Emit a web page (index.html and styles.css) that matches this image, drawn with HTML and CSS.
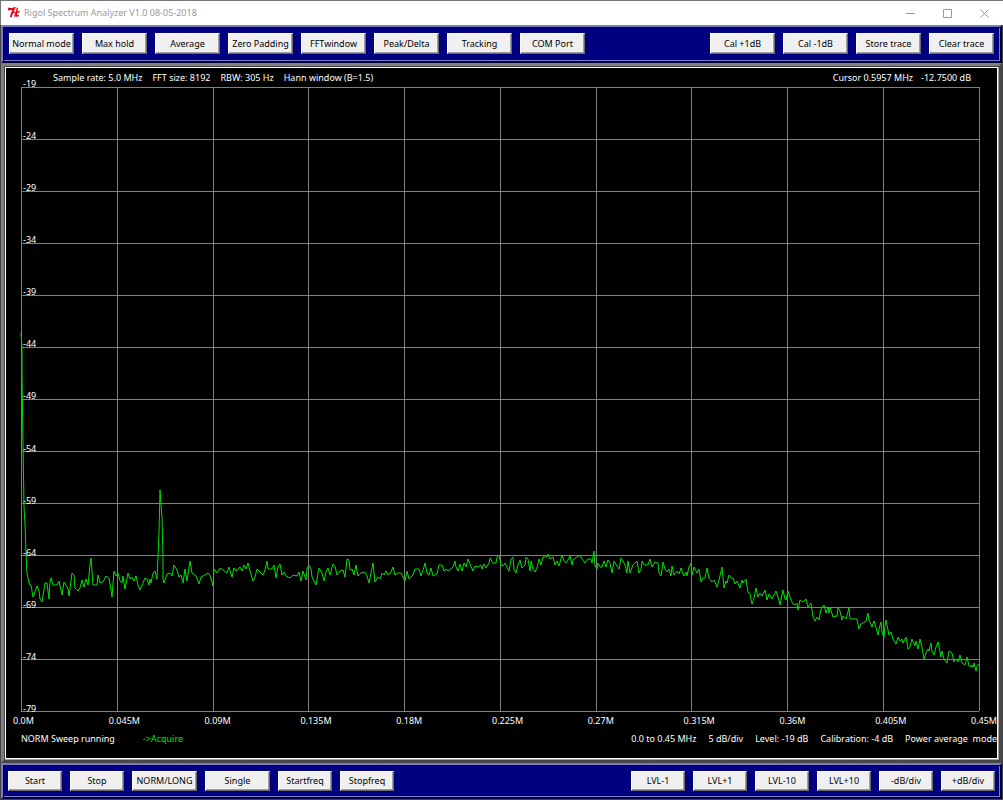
FILE: index.html
```
<!DOCTYPE html>
<html lang="en">
<head>
  <meta charset="UTF-8" />
  <meta name="viewport" content="width=device-width, initial-scale=1" />
  <title>Rigol Spectrum Analyzer V1.0 08-05-2018</title>
  <link rel="stylesheet" href="styles.css">
</head>
<body>
  <header class="titlebar">
    <svg class="logo" viewBox="0 0 12 12" aria-hidden="true">
      <path d="M0.3 3.2 L1 1.8 Q3.5 2.6 6 1.4 Q4.2 5 2.8 10" />
      <path class="thin" d="M9.6 0.8 L6.8 9.8 M5 5.8 L7 5 M11.6 4.2 L8 6.4 L9 9.2 L10.8 8.4" />
    </svg>
    <h1>Rigol Spectrum Analyzer V1.0 08-05-2018</h1>
    <div class="window-controls">
      <button type="button" aria-label="Minimize"><svg viewBox="0 0 9 9"><path d="M0 4.5H9" /></svg></button>
      <button type="button" aria-label="Maximize"><svg viewBox="0 0 9 9"><path d="M0.5 0.5H8.5V8.5H0.5Z" /></svg></button>
      <button type="button" aria-label="Close"><svg viewBox="0 0 9 9"><path d="M0.5 0.5L8.5 8.5M8.5 0.5L0.5 8.5" /></svg></button>
    </div>
  </header>

  <nav class="toolbar" aria-label="Modes">
    <div class="group">
      <button type="button" class="wide">Normal mode</button>
      <button type="button" class="wide">Max hold</button>
      <button type="button" class="wide">Average</button>
      <button type="button" class="wide">Zero Padding</button>
      <button type="button" class="wide">FFTwindow</button>
      <button type="button" class="wide">Peak/Delta</button>
      <button type="button" class="wide">Tracking</button>
      <button type="button" class="wide">COM Port</button>
    </div>
    <div class="group">
      <button type="button" class="wide">Cal +1dB</button>
      <button type="button" class="wide">Cal -1dB</button>
      <button type="button" class="wide">Store trace</button>
      <button type="button" class="wide">Clear trace</button>
    </div>
  </nav>

  <main class="screen">
    <div class="info">
      <div class="info-left">
        <span>Sample rate: 5.0 MHz</span>
        <span>FFT size: 8192</span>
        <span>RBW: 305 Hz</span>
        <span>Hann window (B=1.5)</span>
      </div>
      <div class="info-right">
        <span>Cursor 0.5957 MHz</span>
        <span>-12.7500 dB</span>
      </div>
    </div>

    <div class="plot">
      <svg viewBox="21 87 958 624" preserveAspectRatio="none" role="img" aria-label="Spectrum trace">
        <path class="grid" d="M21 87H979M21 139H979M21 191H979M21 243H979M21 295H979M21 347H979M21 399H979M21 451H979M21 503H979M21 555H979M21 607H979M21 659H979M21 711H979" />
        <path class="grid" d="M21 87V711M117 87V711M213 87V711M308 87V711M404 87V711M500 87V711M596 87V711M691 87V711M787 87V711M883 87V711M979 87V711" />
        <polyline class="trace" points="
          21,333 22,347 22,375 23,443 24,507 25,523 26,553 27,573 29,583 30,585 31,585 33,597 34,595 37,586 39,591 40,599
          42,602 45,583 47,583 49,599 50,582 51,578 53,585 57,585 59,581 61,590 62,595 64,582 67,587 68,589
          69,596 72,573 74,575 75,588 78,591 80,588 82,580 84,587 86,579 88,585 90,565 91,558 93,585 97,585
          98,575 100,583 103,582 106,576 109,578 111,590 112,597 114,571 116,576 118,573 120,581 122,583 123,576 125,589
          128,573 130,579 132,577 134,581 136,576 138,585 140,590 143,583 145,578 147,579 149,585 150,579 151,583 153,573
          155,571 157,579 159,533 160,490 161,505 162,517 163,560 163,580 164,583 167,574 170,573 172,576 174,565 177,570
          179,577 181,575 183,583 185,569 187,581 189,567 190,561 192,573 196,576 199,584 201,577 205,575 208,573 210,575
          213,586 214,569 217,573 220,568 223,570 227,573 229,567 232,577 234,568 236,571 240,567 242,571 244,565 246,569
          248,563 250,571 253,581 255,577 257,569 260,572 263,575 265,570 267,561 268,569 272,569 274,565 276,578 278,567
          280,564 282,575 284,572 286,576 290,578 293,575 297,576 299,572 301,581 303,571 306,580 307,569 309,565 311,569
          312,577 314,581 316,585 318,573 319,568 322,573 324,581 326,572 328,568 330,575 333,564 335,566 337,575 340,571
          343,570 345,577 347,559 349,560 350,570 352,569 354,575 356,565 358,576 361,573 365,572 367,576 369,583 371,573
          373,563 375,582 378,577 380,579 382,573 384,575 386,571 388,575 391,572 393,567 395,575 398,573 401,573 403,577
          405,581 407,571 409,579 413,575 415,569 419,569 421,576 424,567 425,563 427,573 429,575 431,568 433,576 437,574
          439,565 442,565 444,571 446,569 448,571 451,569 453,567 455,561 456,567 458,571 460,564 462,571 464,563 466,567
          468,559 470,564 473,571 475,566 478,567 481,565 482,569 484,564 486,568 489,563 490,558 493,563 496,563 497,557
          499,555 501,565 503,566 505,563 509,571 511,559 513,557 514,569 516,573 518,565 520,560 522,568 525,565 526,557
          528,559 530,571 531,561 533,569 535,572 537,568 539,559 541,565 543,557 547,557 548,554 550,559 553,557 555,565
          557,561 559,566 562,555 564,561 566,563 568,560 570,556 572,565 573,560 577,557 580,555 582,559 585,563 588,559
          591,559 592,563 594,551 595,566 597,569 598,563 600,567 602,567 604,561 606,567 608,560 610,563 612,573 614,561
          617,566 619,569 621,558 623,561 625,565 627,573 628,561 630,573 633,565 635,563 637,561 639,573 641,569 642,561
          644,565 648,565 650,559 652,567 655,562 658,563 659,573 661,576 663,562 665,569 667,572 669,569 671,576 672,566
          674,575 677,571 679,574 681,568 683,574 684,576 686,572 687,576 689,567 691,563 692,575 694,567 697,573 699,569
          701,582 703,578 705,578 707,568 709,578 712,582 714,580 717,587 719,580 722,567 724,588 726,581 727,583 729,575
          731,578 733,578 735,584 737,581 740,588 742,580 743,583 746,579 748,592 750,594 752,604 754,598 756,588 758,597
          760,593 762,596 765,590 767,600 769,594 772,599 774,595 776,591 778,597 780,605 783,590 785,599 786,600 788,591
          791,600 793,604 795,605 797,603 798,610 800,600 803,602 806,599 808,607 811,603 813,617 815,621 817,617 819,620
          821,609 824,605 826,613 828,607 829,613 830,607 833,617 837,616 838,608 840,611 842,620 843,616 846,619 849,608
          850,619 853,619 857,619 859,629 861,624 863,623 866,621 868,613 869,620 872,627 874,621 876,627 878,635 879,629
          881,622 882,632 884,638 885,626 886,620 888,630 889,635 891,632 893,639 896,644 898,637 900,641 902,639 903,643
          906,637 908,649 910,647 912,639 915,646 916,641 918,649 920,639 922,647 924,659 926,653 928,649 929,651 931,643
          932,652 934,655 936,647 938,642 941,657 942,651 944,659 947,663 949,651 952,653 954,662 956,659 958,662 960,655
          962,663 965,665 967,657 969,666 971,667 972,665 973,667 974,663 976,671 977,666 979,664" />
      </svg>
      <div class="levels">
        <span>-19</span><span>-24</span><span>-29</span><span>-34</span><span>-39</span><span>-44</span><span>-49</span><span>-54</span><span>-59</span><span>-64</span><span>-69</span><span>-74</span><span>-79</span>
      </div>
    </div>

    <div class="freqs">
      <span>0.0M</span><span>0.045M</span><span>0.09M</span><span>0.135M</span><span>0.18M</span><span>0.225M</span><span>0.27M</span><span>0.315M</span><span>0.36M</span><span>0.405M</span><span>0.45M</span>
    </div>

    <div class="status">
      <div class="status-left">
        <span>NORM Sweep running</span>
        <span class="acquire">-&gt;Acquire</span>
      </div>
      <div class="status-right">
        <span>0.0 to 0.45 MHz</span>
        <span>5 dB/div</span>
        <span>Level: -19 dB</span>
        <span>Calibration: -4 dB</span>
        <span>Power average&nbsp; mode</span>
      </div>
    </div>
  </main>

  <footer class="toolbar bottom">
    <div class="group">
      <button type="button">Start</button>
      <button type="button">Stop</button>
      <button type="button" class="wide">NORM/LONG</button>
      <button type="button" class="wide">Single</button>
      <button type="button">Startfreq</button>
      <button type="button">Stopfreq</button>
    </div>
    <div class="group">
      <button type="button">LVL-1</button>
      <button type="button">LVL+1</button>
      <button type="button">LVL-10</button>
      <button type="button">LVL+10</button>
      <button type="button">-dB/div</button>
      <button type="button">+dB/div</button>
    </div>
  </footer>
</body>
</html>
```
FILE: styles.css
```
* {
  box-sizing: border-box;
}
body {
  margin: 0;
  background: #444;
  font-family: 'Noto Sans', 'Open Sans', sans-serif;
  font-size: 9px;
  line-height: 12px;
  color: #000;
  display: flex;
  flex-direction: column;
  min-height: 100vh;
}
button {
  font: inherit;
  color: inherit;
  padding: 0;
  white-space: nowrap;
}

/* title bar */
.titlebar {
  height: 25px;
  background: #fff;
  border-top: 1px solid #777;
  border-left: 1px solid #777;
  display: flex;
  align-items: center;
  padding-left: 7px;
}
.logo {
  width: 12px;
  height: 12px;
  margin-right: 4px;
  fill: none;
  stroke: #f00010;
  stroke-width: 2;
}
.logo .thin {
  stroke-width: 1.4;
}
.titlebar h1 {
  margin: 0;
  flex: 1;
  font-size: 9px;
  font-weight: 400;
  color: #999;
}
.window-controls {
  display: flex;
}
.window-controls button {
  width: 37px;
  height: 24px;
  border: none;
  background: none;
  display: flex;
  align-items: center;
  justify-content: center;
}
.window-controls svg {
  width: 9px;
  height: 9px;
  fill: none;
  stroke: #999;
}

/* button rows */
.toolbar {
  margin: 0 1px;
  background: #000080;
  border: 2px solid;
  border-color: #7c7cc4 #000040 #000040 #7c7cc4;
  box-shadow: inset 1px 1px #000040, inset -1px -1px #7c7cc4;
  padding: 6px 6px 7px;
  display: flex;
  justify-content: space-between;
}
.toolbar.bottom {
  margin-bottom: 1px;
  padding: 6px 5px;
}
.group {
  display: flex;
  gap: 8px;
}
.toolbar button {
  width: 54px;
  height: 21px;
  background: #f0f0f0;
  border: 1px solid;
  border-color: #fff #696969 #696969 #fff;
  box-shadow: inset -1px -1px #a0a0a0;
  overflow: hidden;
}
.toolbar.bottom button {
  height: 20px;
}
.toolbar button.wide {
  width: 65px;
}

/* analyzer screen */
.screen {
  flex: 1;
  margin: 0 1px;
  padding: 2px;
  background: #000;
  color: #fff;
  border: 3px solid;
  border-color: #808080 #484848 #484848 #808080;
  box-shadow: inset 1px 1px #404040, inset -1px -1px #a0a0a0, inset 0 0 0 2px #fff;
  display: flex;
  flex-direction: column;
  overflow: hidden;
  white-space: nowrap;
}
.info {
  display: flex;
  justify-content: space-between;
  padding: 4px 26px 3px 47px;
}
.info-left {
  display: flex;
  gap: 10px;
}
.info-right {
  display: flex;
  gap: 8px;
}
.plot {
  flex: 1;
  position: relative;
  margin: 0 18px 0 15px;
}
.plot svg {
  position: absolute;
  top: 0;
  left: 0;
  width: 100%;
  height: 100%;
  overflow: visible;
  fill: none;
}
.grid {
  stroke: #808080;
  vector-effect: non-scaling-stroke;
  shape-rendering: crispEdges;
}
.trace {
  stroke: #00e000;
  vector-effect: non-scaling-stroke;
}
.levels {
  position: absolute;
  top: -9px;
  bottom: -4px;
  left: 2px;
  display: flex;
  flex-direction: column;
  justify-content: space-between;
}
.freqs {
  display: grid;
  grid-template-columns: repeat(10, 1fr) 0;
  margin: 4px 26px 0 7px;
}
.status {
  display: flex;
  justify-content: space-between;
  padding: 6px 0 13px 15px;
}
.status-left {
  display: flex;
  gap: 28px;
}
.status-right {
  display: flex;
  gap: 12px;
}
.acquire {
  color: #00e000;
}
```
